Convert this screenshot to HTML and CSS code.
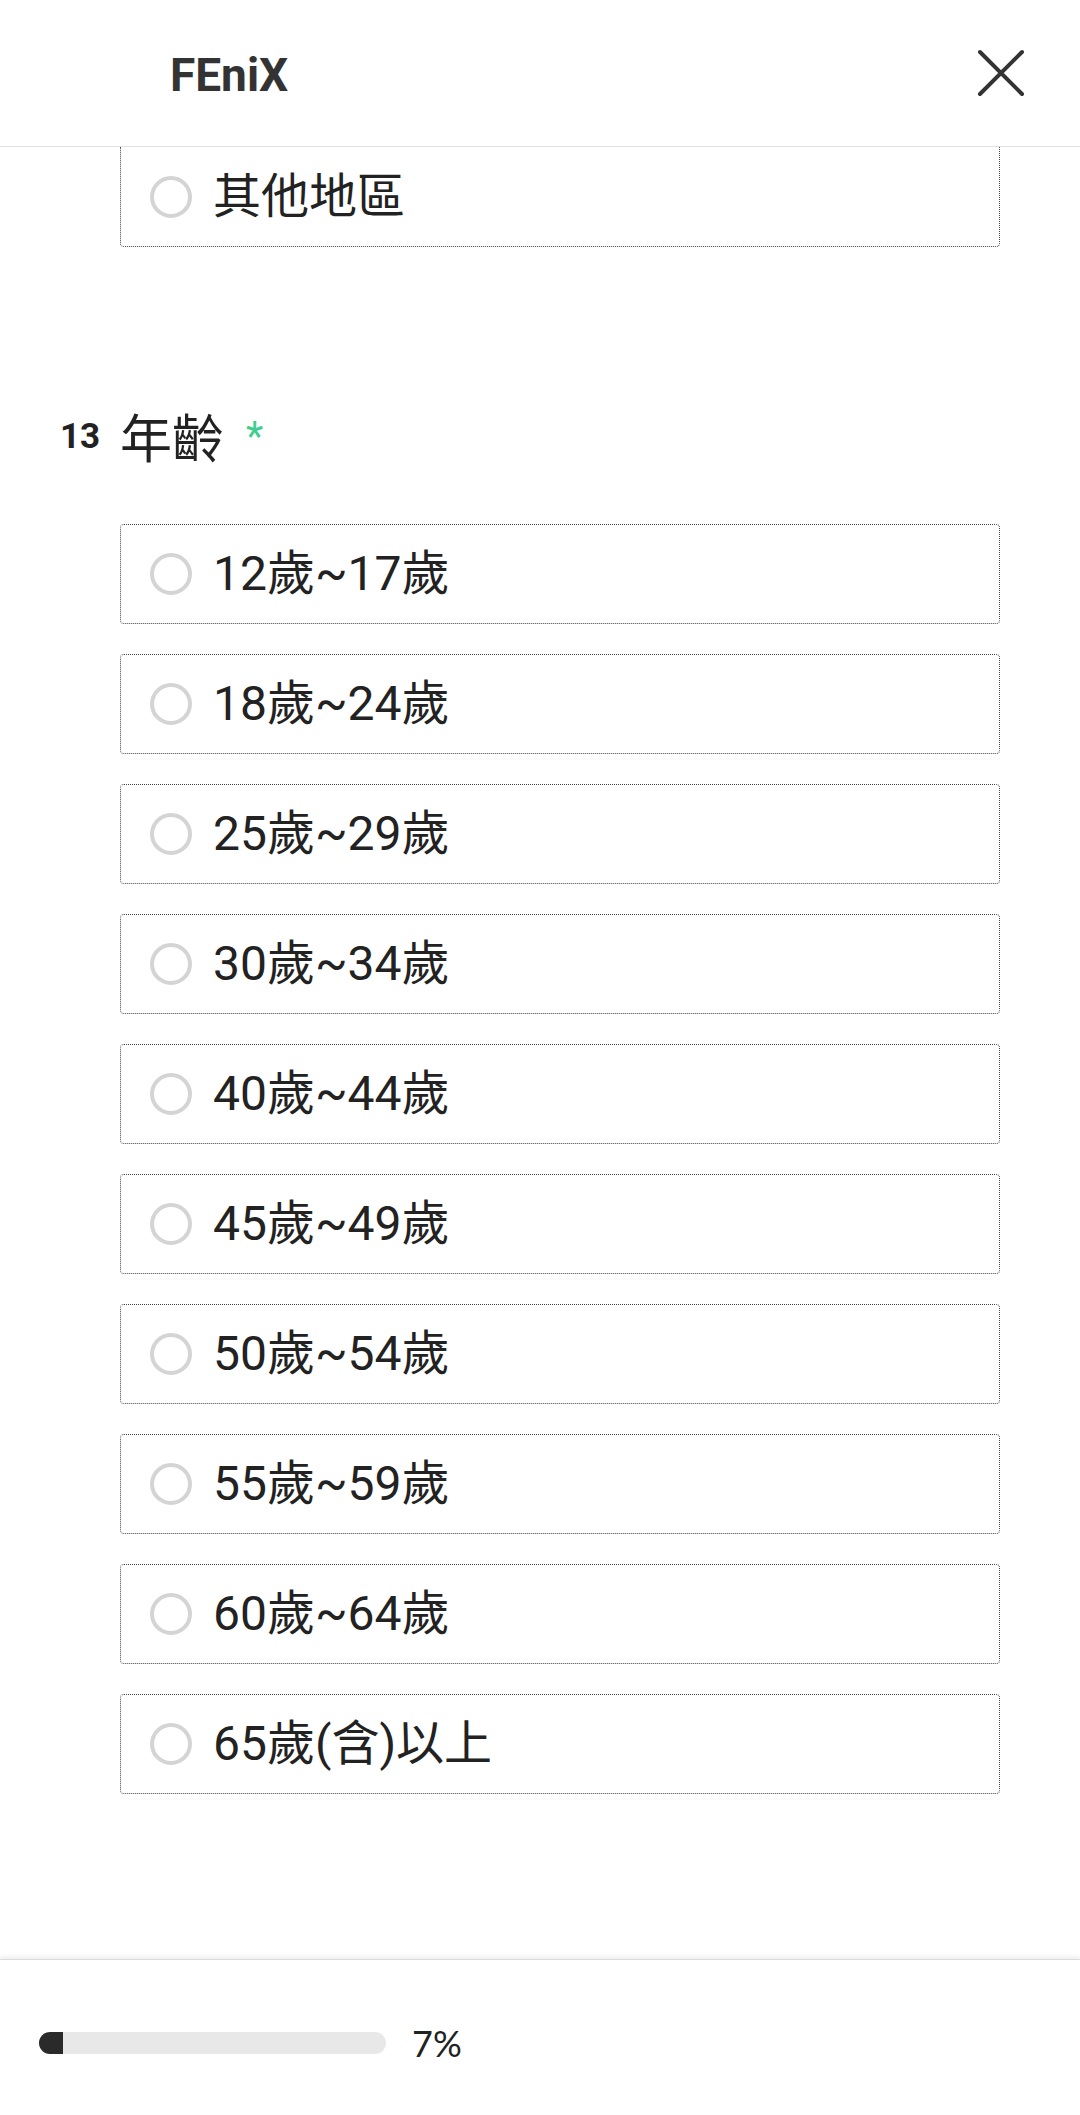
FILE: index.html
```html
<!DOCTYPE html>
<html lang="zh-Hant">
<head>
<meta charset="utf-8">
<title>FEniX</title>
<link rel="stylesheet" href="styles.css">
</head>
<body>
<div class="page">
  <header class="topbar">
    <div class="brand">FEniX</div>
    <button class="close" aria-label="關閉">
      <svg width="48" height="48" viewBox="0 0 48 48"><path d="M3 3L45 45M45 3L3 45" stroke="#333" stroke-width="4" stroke-linecap="round" fill="none"/></svg>
    </button>
  </header>
  <main class="content">
    <div class="options">
      <label class="option option-cut"><span class="radio"></span><span class="opt-text">其他地區</span></label>
    </div>
    <section class="question">
      <div class="q-head">
        <span class="q-num">13</span>
        <span class="q-title">年齡</span>
        <span class="q-req">*</span>
      </div>
      <div class="options">
        <label class="option"><span class="radio"></span><span class="opt-text">12歲~17歲</span></label>
        <label class="option"><span class="radio"></span><span class="opt-text">18歲~24歲</span></label>
        <label class="option"><span class="radio"></span><span class="opt-text">25歲~29歲</span></label>
        <label class="option"><span class="radio"></span><span class="opt-text">30歲~34歲</span></label>
        <label class="option"><span class="radio"></span><span class="opt-text">40歲~44歲</span></label>
        <label class="option"><span class="radio"></span><span class="opt-text">45歲~49歲</span></label>
        <label class="option"><span class="radio"></span><span class="opt-text">50歲~54歲</span></label>
        <label class="option"><span class="radio"></span><span class="opt-text">55歲~59歲</span></label>
        <label class="option"><span class="radio"></span><span class="opt-text">60歲~64歲</span></label>
        <label class="option"><span class="radio"></span><span class="opt-text">65歲(含)以上</span></label>
      </div>
    </section>
  </main>
  <footer class="footer">
    <div class="progress"><div class="progress-fill" style="width:7%"></div></div>
    <span class="progress-label">7%</span>
  </footer>
</div>
</body>
</html>
```
FILE: styles.css
```css
* { box-sizing: border-box; }
html, body { margin: 0; padding: 0; background: #fff; }
body {
  font-family: Roboto, "Noto Sans CJK TC", "Noto Sans", sans-serif;
  color: #222;
}
.page {
  height: 2115px;
  display: flex;
  flex-direction: column;
  overflow: hidden;
}
.topbar {
  flex: 0 0 147px;
  display: flex;
  align-items: center;
  justify-content: space-between;
  padding: 0 55px 0 170px;
  border-bottom: 1px solid #e0e0e0;
}
.brand {
  font-family: Roboto, sans-serif;
  font-weight: 700;
  font-size: 46px;
  color: #333;
  line-height: 1;
  padding-top: 4px;
}
.close {
  border: 0;
  background: none;
  padding: 0;
  width: 48px;
  height: 48px;
  display: flex;
}
.content {
  flex: 1;
  overflow: hidden;
}
.options {
  display: flex;
  flex-direction: column;
  gap: 30px;
  padding: 0 80px 0 120px;
}
.option {
  height: 100px;
  border: 1px dotted #444;
  border-radius: 4px;
  display: flex;
  align-items: center;
  padding-left: 29px;
  gap: 21px;
}
.option-cut {
  border-top: none;
  border-top-left-radius: 0;
  border-top-right-radius: 0;
  height: 100px;
}
.radio {
  width: 42px;
  height: 42px;
  border: 4px solid #d4d4d4;
  border-radius: 50%;
  flex: 0 0 auto;
}
.opt-text {
  font-size: 48px;
  line-height: 1;
  color: #222;
}
.question {
  padding-top: 168px;
}
.q-head {
  display: flex;
  align-items: baseline;
  padding-left: 60px;
  margin-bottom: 56px;
}
.q-num {
  font-family: Roboto, sans-serif;
  font-weight: 700;
  font-size: 35px;
  width: 60px;
  color: #222;
  position: relative;
  top: -10px;
}
.q-title {
  font-size: 52px;
  line-height: 1;
  color: #222;
}
.q-req {
  font-family: Roboto, sans-serif;
  font-size: 40px;
  color: #3ecf8e;
  margin-left: 22px;
  position: relative;
  top: -8px;
}
.footer {
  flex: 0 0 156px;
  border-top: 1px solid #dcdcdc;
  box-shadow: 0 -2px 5px rgba(0,0,0,0.08);
  display: flex;
  align-items: center;
  padding: 10px 0 0 39px;
  gap: 26px;
}
.progress {
  width: 347px;
  height: 22px;
  background: #e8e8e8;
  border-radius: 11px;
  overflow: hidden;
}
.progress-fill {
  height: 100%;
  background: #2a2a2a;
}
.progress-label {
  font-family: Lato, Roboto, sans-serif;
  font-size: 36px;
  color: #222;
  line-height: 1;
}
```
